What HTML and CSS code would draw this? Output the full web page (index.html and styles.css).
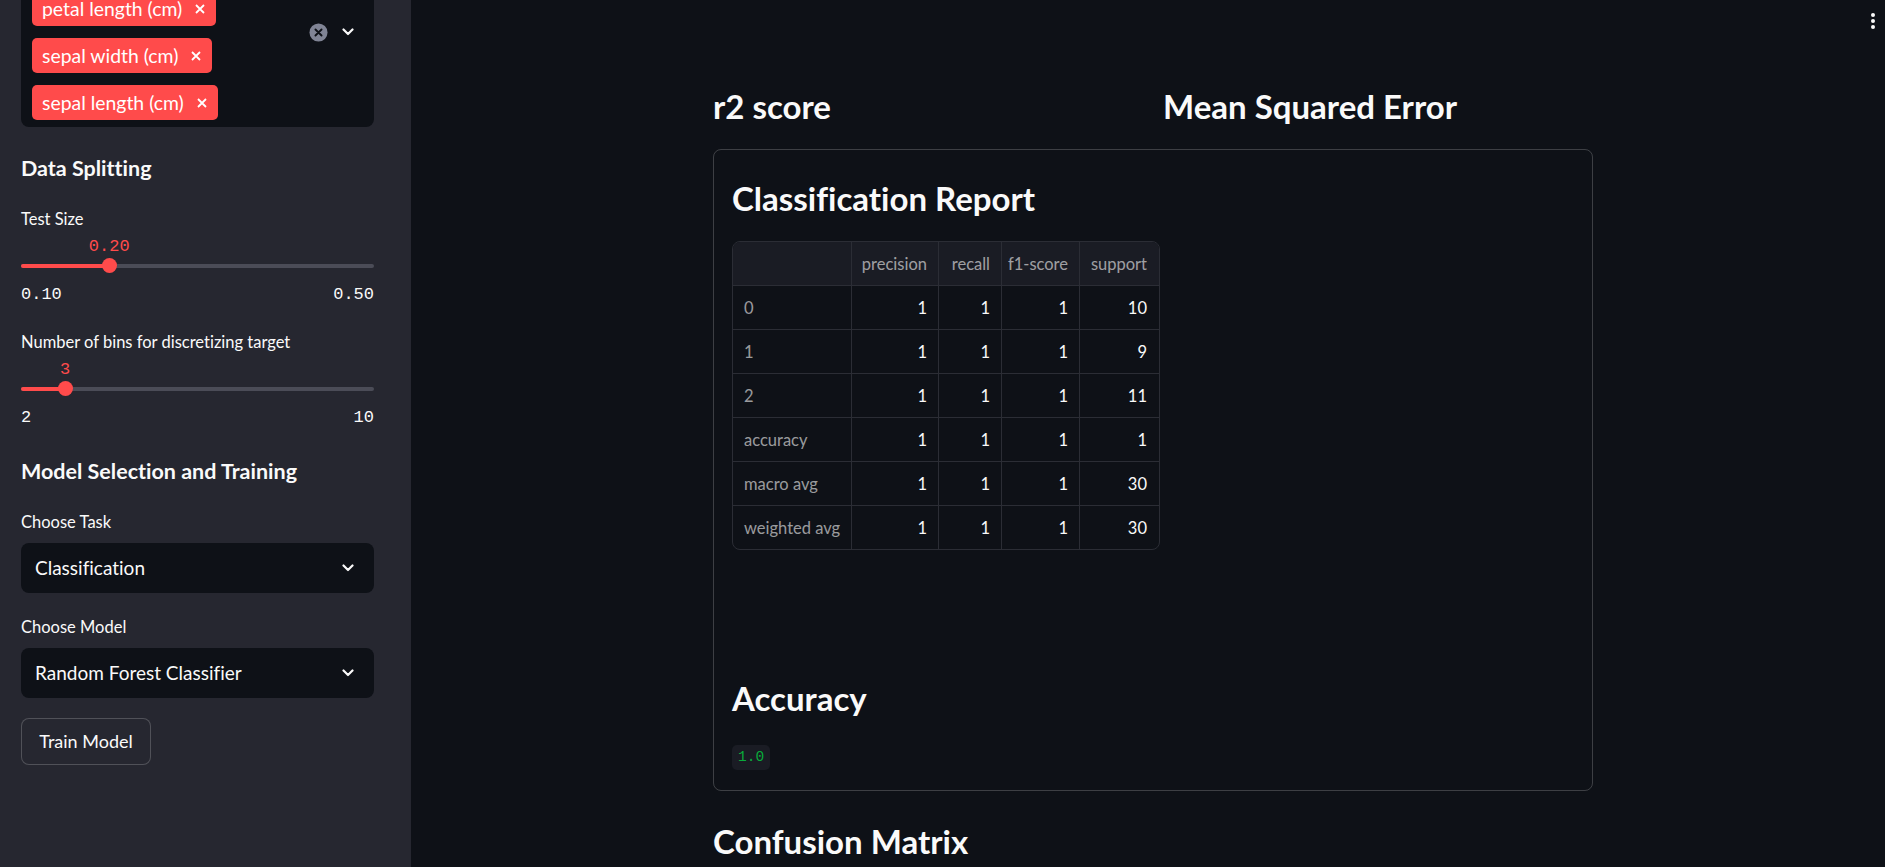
FILE: index.html
```html
<!DOCTYPE html>
<html lang="en">
<head>
<meta charset="utf-8">
<title>Model Training</title>
<link rel="stylesheet" href="styles.css">
</head>
<body>
<div class="app">
  <aside class="sidebar">
    <div class="sb-inner">
      <div class="ms">
        <div class="ms-tags">
          <span class="tag"><span>petal width (cm)</span><svg class="tag-x" viewBox="0 0 10 10"><path d="M1 1L9 9M9 1L1 9"/></svg></span>
          <span class="tag"><span>petal length (cm)</span><svg class="tag-x" viewBox="0 0 10 10"><path d="M1 1L9 9M9 1L1 9"/></svg></span>
          <span class="tag"><span>sepal width (cm)</span><svg class="tag-x" viewBox="0 0 10 10"><path d="M1 1L9 9M9 1L1 9"/></svg></span>
          <span class="tag"><span>sepal length (cm)</span><svg class="tag-x" viewBox="0 0 10 10"><path d="M1 1L9 9M9 1L1 9"/></svg></span>
        </div>
        <div class="ms-icons">
          <svg class="clear" viewBox="0 0 20 20"><circle cx="10" cy="10" r="9.5"/><path d="M6.8 6.8l6.4 6.4M13.2 6.8l-6.4 6.4"/></svg>
          <svg class="chev" viewBox="0 0 12 8"><path d="M1.5 1.5L6 6l4.5-4.5"/></svg>
        </div>
      </div>

      <h3 class="sb-h">Data Splitting</h3>
      <div class="field slider">
        <div class="lbl">Test Size</div>
        <div class="sl-val-row"><span class="sl-val" style="left:25%">0.20</span></div>
        <div class="sl-rail">
          <div class="sl-line"><div class="sl-fill" style="width:25%"></div></div>
          <div class="sl-thumb" style="left:25%"></div>
        </div>
        <div class="sl-minmax"><span>0.10</span><span>0.50</span></div>
      </div>
      <div class="field slider">
        <div class="lbl">Number of bins for discretizing target</div>
        <div class="sl-val-row"><span class="sl-val" style="left:12.5%">3</span></div>
        <div class="sl-rail">
          <div class="sl-line"><div class="sl-fill" style="width:12.5%"></div></div>
          <div class="sl-thumb" style="left:12.5%"></div>
        </div>
        <div class="sl-minmax"><span>2</span><span>10</span></div>
      </div>

      <h3 class="sb-h sb-h-lg">Model Selection and Training</h3>
      <div class="field">
        <div class="lbl">Choose Task</div>
        <div class="select"><span>Classification</span><svg class="chev" viewBox="0 0 12 8"><path d="M1.5 1.5L6 6l4.5-4.5"/></svg></div>
      </div>
      <div class="field field-sm">
        <div class="lbl">Choose Model</div>
        <div class="select"><span>Random Forest Classifier</span><svg class="chev" viewBox="0 0 12 8"><path d="M1.5 1.5L6 6l4.5-4.5"/></svg></div>
      </div>
      <button class="btn" type="button">Train Model</button>
    </div>
  </aside>

  <main class="main">
    <div class="block">
      <div class="cols">
        <h3 class="h">r2 score</h3>
        <h3 class="h">Mean Squared Error</h3>
      </div>
      <section class="card">
        <h3 class="h card-h">Classification Report</h3>
        <div class="df">
          <div class="c hd"></div><div class="c hd">precision</div><div class="c hd">recall</div><div class="c hd">f1-score</div><div class="c hd last">support</div>
          <div class="c ix">0</div><div class="c">1</div><div class="c">1</div><div class="c">1</div><div class="c last">10</div>
          <div class="c ix">1</div><div class="c">1</div><div class="c">1</div><div class="c">1</div><div class="c last">9</div>
          <div class="c ix">2</div><div class="c">1</div><div class="c">1</div><div class="c">1</div><div class="c last">11</div>
          <div class="c ix">accuracy</div><div class="c">1</div><div class="c">1</div><div class="c">1</div><div class="c last">1</div>
          <div class="c ix">macro avg</div><div class="c">1</div><div class="c">1</div><div class="c">1</div><div class="c last">30</div>
          <div class="c ix bot">weighted avg</div><div class="c bot">1</div><div class="c bot">1</div><div class="c bot">1</div><div class="c last bot">30</div>
        </div>
        <h3 class="h acc-h">Accuracy</h3>
        <code class="code">1.0</code>
      </section>
      <h3 class="h cm-h">Confusion Matrix</h3>
    </div>
  </main>

  <div class="menu"><span></span><span></span><span></span></div>
</div>
</body>
</html>
```
FILE: styles.css
```css
* { box-sizing: border-box; }
html, body { margin: 0; height: 100%; }
body {
  background: #0e1117;
  color: #fafafa;
  font-family: "Lato", "Noto Sans", sans-serif;
  font-variant-ligatures: no-common-ligatures;
  overflow: hidden;
}
.app { display: flex; height: 867px; position: relative; }

/* Sidebar */
.sidebar { width: 411px; flex: none; background: #262730; overflow: hidden; }
.sb-inner { margin-top: -63px; padding-left: 21px; width: 374px; }

.ms {
  display: flex; align-items: center;
  background: #0e1117; border-radius: 8px;
  padding: 7px 0 7px 11px;
}
.ms-tags { flex: 1; display: flex; flex-direction: column; align-items: flex-start; gap: 12px; }
.tag {
  display: flex; align-items: center; gap: 13px;
  height: 35px; padding: 0 11px 0 10px;
  background: #ff4b4b; border-radius: 5px;
  color: #fff; font-size: 19.4px; white-space: nowrap;
}
.tag-x { width: 10px; height: 10px; stroke: #fff; stroke-width: 1.8; fill: none; }
.ms-icons { display: flex; align-items: center; gap: 14.5px; padding-right: 20px; }
.clear { width: 19px; height: 19px; }
.clear circle { fill: #808495; }
.clear path { stroke: #0e1117; stroke-width: 2; fill: none; stroke-linecap: round; }
.chev { width: 12px; height: 8px; fill: none; stroke: #fafafa; stroke-width: 2.2; stroke-linecap: round; stroke-linejoin: round; }

.sb-h { margin: 28.8px 0 0; font-size: 21.5px; line-height: 25.8px; font-weight: 700; }
.sb-h-lg { margin-top: 31.3px; }

.field { margin-top: 27px; }
.field-sm { margin-top: 24px; }
.lbl { font-size: 16.5px; line-height: 21px; }

.sl-val-row { position: relative; height: 21px; margin-top: 6px; }
.sl-val {
  position: absolute; top: 0; transform: translateX(-50%);
  font-family: "Liberation Mono", monospace; font-size: 17px; line-height: 21px; color: #ff4b4b;
}
.sl-rail { position: relative; height: 16px; margin-top: 1px; padding-top: 6px; }
.sl-line { height: 4px; border-radius: 2px; background: #4b4c57; overflow: hidden; }
.sl-fill { height: 100%; background: #ff4b4b; }
.sl-thumb {
  position: absolute; top: 0.5px; width: 15px; height: 15px; margin-left: -7.5px;
  border-radius: 50%; background: #ff4b4b;
}
.sl-minmax {
  display: flex; justify-content: space-between; margin-top: 11px;
  font-family: "Liberation Mono", monospace; font-size: 17px; line-height: 20px;
}

.select {
  display: flex; align-items: center; justify-content: space-between;
  margin-top: 10px; height: 50px; padding: 0 20px 0 14px;
  background: #0e1117; border-radius: 8px; font-size: 19px;
}
.btn {
  margin-top: 20px; height: 47px; width: 130px;
  background: #262730; color: #fafafa;
  border: 1px solid rgba(250, 250, 250, 0.2); border-radius: 8px;
  font-family: inherit; font-size: 18px; padding: 0;
}

/* Main */
.main { flex: 1; padding: 87.4px 0 0 302px; }
.block { width: 880px; }
.h { margin: 0; font-size: 33px; line-height: 39.6px; font-weight: 700; }
.cols { display: grid; grid-template-columns: 1fr 1fr; gap: 20px; }

.card {
  margin-top: 22px;
  border: 1px solid rgba(250, 250, 250, 0.2); border-radius: 8px;
  padding: 20px 18px 20px;
}
.card-h { margin-top: 9.4px; }

.df {
  display: grid; grid-template-columns: 119px 87px 63px 78px 79px;
  width: 428px; margin-top: 22.5px;
  border: 1px solid #2b2d35; border-radius: 8px; overflow: hidden;
  font-size: 16.5px;
}
.c {
  height: 44px; display: flex; align-items: center; justify-content: flex-end;
  padding: 0 11px 0 8px; white-space: nowrap;
  border-right: 1px solid #2b2d35; border-bottom: 1px solid #2b2d35;
  color: #fafafa;
}
.c.last { border-right: none; padding-right: 12px; }
.c.bot { border-bottom: none; height: 43px; }
.c.hd { background: #1a1c24; color: rgba(250, 250, 250, 0.6); }
.c.ix { justify-content: flex-start; padding-left: 11px; color: rgba(250, 250, 250, 0.6); }

.acc-h { margin-top: 128.9px; }
.code {
  display: inline-block; margin-top: 26px;
  font-family: "Liberation Mono", monospace; font-size: 14.5px; line-height: 19px;
  padding: 3px 6px; border-radius: 5px;
  background: #1a1c24; color: #09ab3b;
}
.cm-h { margin-top: 31.4px; }

/* Toolbar menu */
.menu {
  position: absolute; top: 13px; right: 10px;
  display: flex; flex-direction: column; gap: 2px;
}
.menu span { width: 4px; height: 4px; border-radius: 50%; background: #fafafa; }
```
